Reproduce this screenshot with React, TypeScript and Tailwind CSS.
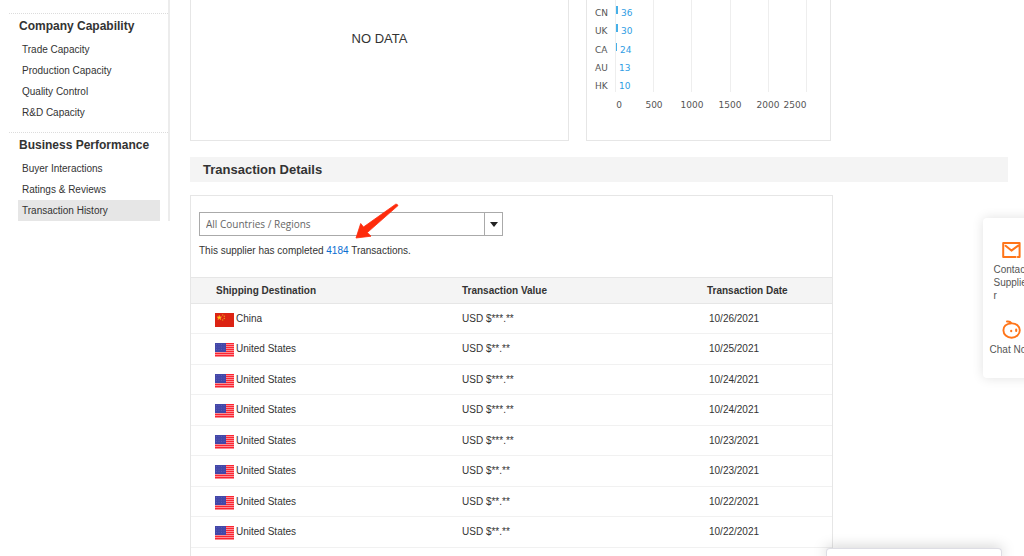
import React from 'react'

interface NavGroup {
  title: string
  items: string[]
}

interface Transaction {
  country: 'China' | 'United States'
  value: string
  date: string
}

const navGroups: NavGroup[] = [
  {
    title: 'Company Capability',
    items: ['Trade Capacity', 'Production Capacity', 'Quality Control', 'R&D Capacity'],
  },
  {
    title: 'Business Performance',
    items: ['Buyer Interactions', 'Ratings & Reviews', 'Transaction History'],
  },
]

const transactions: Transaction[] = [
  { country: 'China', value: 'USD $***.**', date: '10/26/2021' },
  { country: 'United States', value: 'USD $**.**', date: '10/25/2021' },
  { country: 'United States', value: 'USD $***.**', date: '10/24/2021' },
  { country: 'United States', value: 'USD $***.**', date: '10/24/2021' },
  { country: 'United States', value: 'USD $***.**', date: '10/23/2021' },
  { country: 'United States', value: 'USD $**.**', date: '10/23/2021' },
  { country: 'United States', value: 'USD $**.**', date: '10/22/2021' },
  { country: 'United States', value: 'USD $**.**', date: '10/22/2021' },
]

const bars = [
  { code: 'CN', count: 36, y: 6, width: 2, labelX: 34 },
  { code: 'UK', count: 30, y: 24, width: 2, labelX: 34 },
  { code: 'CA', count: 24, y: 43, width: 1, labelX: 33 },
  { code: 'AU', count: 13, y: 61, width: 0, labelX: 32 },
  { code: 'HK', count: 10, y: 79, width: 0, labelX: 32 },
]

const gridLines = [28, 66, 104, 143, 181, 219]

const ticks = [
  { label: '0', x: 32 },
  { label: '500', x: 67 },
  { label: '1000', x: 105 },
  { label: '1500', x: 143 },
  { label: '2000', x: 181 },
  { label: '2500', x: 208 },
]

const ChinaFlag = () => (
  <svg width="19" height="14" viewBox="0 0 19 14" aria-hidden="true">
    <rect width="19" height="14" fill="#dc2313" />
    <path d="m4.3 2.4.6 1.5h1.6L5.2 5l.5 1.6-1.4-1-1.4 1L3.4 5 2.1 3.9h1.6z" fill="#ffd21c" stroke="#ffb01c" strokeWidth=".6" />
    <g fill="#e99a18">
      <circle cx="7.7" cy="1.9" r=".7" />
      <circle cx="9.3" cy="3.3" r=".7" />
      <circle cx="9.3" cy="5.4" r=".7" />
      <circle cx="7.7" cy="7" r=".7" />
    </g>
  </svg>
)

const UsFlag = () => (
  <svg width="19" height="14" viewBox="0 0 19 14" aria-hidden="true">
    <rect width="19" height="14" fill="#ffd0d4" />
    {[0, 2, 4, 6, 8, 10, 12].map((y) => (
      <rect key={y} y={y} width="19" height="1.4" fill="#fb2632" />
    ))}
    <rect width="11" height="9" fill="#4347a8" />
    <g fill="#5f63ba">
      {[1.5, 4, 6.5].map((y) =>
        [1.5, 4, 6.5, 9].map((x) => <circle key={`${x}-${y}`} cx={x} cy={y} r=".5" />),
      )}
    </g>
  </svg>
)

const Sidebar = () => (
  <nav className="w-[161px] shrink-0 self-start border-r-2 border-[#ececec] pt-[13px]">
    {navGroups.map((group) => (
      <section
        key={group.title}
        className="border-t border-dotted border-[#dcdcdc] pb-[9px] last:pb-0"
      >
        <h3 className="pl-[10px] text-[12px] leading-[25px] font-bold text-[#333]">{group.title}</h3>
        <ul className="mr-2 ml-[9px]">
          {group.items.map((item) => (
            <li key={item}>
              <a
                href="#"
                className={`block pl-1 text-[10px] leading-[21px] ${
                  item === 'Transaction History' ? 'bg-[#e6e6e6]' : ''
                }`}
              >
                {item}
              </a>
            </li>
          ))}
        </ul>
      </section>
    ))}
  </nav>
)

const CountryChart = () => (
  <svg
    width="243"
    height="140"
    viewBox="0 0 243 140"
    role="img"
    aria-label="Transactions by country"
    fontFamily="'DejaVu Sans', sans-serif"
    fontSize="9"
  >
    {gridLines.map((x) => (
      <rect key={x} x={x} width="1" height="92" fill="#eeeeee" />
    ))}
    {bars.map((bar) => (
      <g key={bar.code}>
        <text x="8" y={bar.y + 10} fill="#555">
          {bar.code}
        </text>
        <rect x="29" y={bar.y} width={bar.width} height="8" fill="#46b0e8" />
        <text x={bar.labelX} y={bar.y + 10} fill="#2f9de4">
          {bar.count}
        </text>
      </g>
    ))}
    {ticks.map((tick) => (
      <text key={tick.label} x={tick.x} y="108" textAnchor="middle" fill="#555">
        {tick.label}
      </text>
    ))}
  </svg>
)

const TransactionTable = () => (
  <table className="w-full table-fixed border-separate border-spacing-0 text-left text-[10px] leading-4">
    <thead>
      <tr className="bg-[#f4f4f4]">
        <th className="h-[27px] w-[271px] border-y border-[#e6e6e6] py-0 pl-[25px]">
          Shipping Destination
        </th>
        <th className="w-[245px] border-y border-[#e6e6e6] p-0">Transaction Value</th>
        <th className="border-y border-[#e6e6e6] p-0">Transaction Date</th>
      </tr>
    </thead>
    <tbody>
      {transactions.map((row, index) => (
        <tr key={index} className="h-[30px] even:h-[31px]">
          <td className="border-b border-[#f1f1f1] py-0 pl-6">
            <div className="flex items-start gap-[2px]">
              <span className="pt-[2px]">{row.country === 'China' ? <ChinaFlag /> : <UsFlag />}</span>
              {row.country}
            </div>
          </td>
          <td className="border-b border-[#f1f1f1] p-0">{row.value}</td>
          <td className="border-b border-[#f1f1f1] py-0 pl-[2px]">{row.date}</td>
        </tr>
      ))}
    </tbody>
  </table>
)

const ContactDock = () => (
  <aside className="absolute top-[218px] -right-4 flex h-40 w-[57px] flex-col items-center rounded bg-white pt-[23px] text-[10px] leading-[13px] text-[#555] shadow-[0_0_12px_rgba(0,0,0,0.12)]">
    <button type="button" className="flex w-9 flex-col items-center gap-1">
      <svg width="19" height="18" viewBox="0 0 19 18" fill="none" stroke="#ff7519" strokeWidth="2" aria-hidden="true">
        <path d="M13.6 16H1.2V2h16.4v14h-1.8M3.6 4.8l5.8 4.8 6.8-5" strokeLinejoin="round" strokeLinecap="round" />
      </svg>
      <span className="w-9 text-left break-all">Contact Supplier</span>
    </button>
    <button type="button" className="mt-[18px] flex flex-col items-center gap-1 whitespace-nowrap">
      <svg width="19" height="19" viewBox="0 0 19 19" fill="none" stroke="#ff7519" strokeWidth="1.9" strokeLinecap="round" aria-hidden="true">
        <path d="M5 1.5c2-.3 3.6.5 4.6 1.9 4.6-.2 8.2 2.8 8.2 6.9s-3.6 7.4-8.2 7.4-8.2-3.2-8.2-7.4c0-3.6 2.6-6.4 8.2-6.9" strokeLinejoin="round" />
        <path d="M9.2 10.8v.4M14.2 9.6v1.4" strokeWidth="2.1" />
      </svg>
      Chat Now
    </button>
  </aside>
)

export default function App() {
  return (
    <div className="relative flex min-h-screen overflow-hidden bg-white pr-4 pl-[9px] font-['Liberation_Sans',Arial,sans-serif] text-[#333]">
      <Sidebar />

      <main className="ml-5 flex min-w-0 flex-1 flex-col">
        {/* Charts */}
        <div className="flex w-full max-w-[641px] gap-[17px]">
          <div className="flex flex-1 justify-center border border-t-0 border-[#e6e6e6] pt-7 text-[13px] leading-[22px]">
            NO DATA
          </div>
          <div className="border border-t-0 border-[#e6e6e6]">
            <CountryChart />
          </div>
        </div>

        <h2 className="mt-4 bg-[#f4f4f4] pl-[13px] text-[13px] leading-[25px] font-bold">
          Transaction Details
        </h2>

        {/* Transaction list */}
        <section className="mt-[13px] w-full max-w-[643px] flex-1 border border-b-0 border-[#e6e6e6]">
          <div className="relative px-2 pt-4 pb-4">
            <div className="flex h-6 w-[304px] border border-[#aaa]">
              <select
                aria-label="Country or region"
                className="flex-1 appearance-none bg-white pl-[6px] font-['Open_Sans',sans-serif] text-[10px] text-[#666]"
              >
                <option>All Countries / Regions</option>
                <option>China</option>
                <option>United States</option>
              </select>
              <span className="pointer-events-none flex w-[18px] items-center justify-center border-l border-[#aaa]">
                <svg width="8" height="5" viewBox="0 0 8 5" aria-hidden="true">
                  <path d="M0 0h8L4 5z" fill="#222" />
                </svg>
              </span>
            </div>
            <p className="mt-1 text-[10px] leading-[21px]">
              This supplier has completed <span className="text-[#0a6ed1]">4184</span> Transactions.
            </p>
            <svg
              className="pointer-events-none absolute top-[7px] left-[164px]"
              width="44"
              height="36"
              viewBox="0 0 44 36"
              aria-hidden="true"
            >
              <path
                d="M1 35 5.7 20.5 8.5 24 40.7 1.2Q42.4.8 43 2.6L12.3 29.6 16 33.2z"
                fill="#fe2b0b"
                stroke="#fe2b0b"
                strokeWidth=".8"
                strokeLinejoin="round"
              />
            </svg>
          </div>
          <TransactionTable />
        </section>
      </main>

      <ContactDock />

      {/* Collapsed chat window peeking in at the bottom */}
      <div className="absolute right-[22px] bottom-0 h-2 w-44 rounded-t border border-b-0 border-[#dddde4] bg-white shadow-[0_0_14px_rgba(0,0,0,0.25)]" />
    </div>
  )
}
